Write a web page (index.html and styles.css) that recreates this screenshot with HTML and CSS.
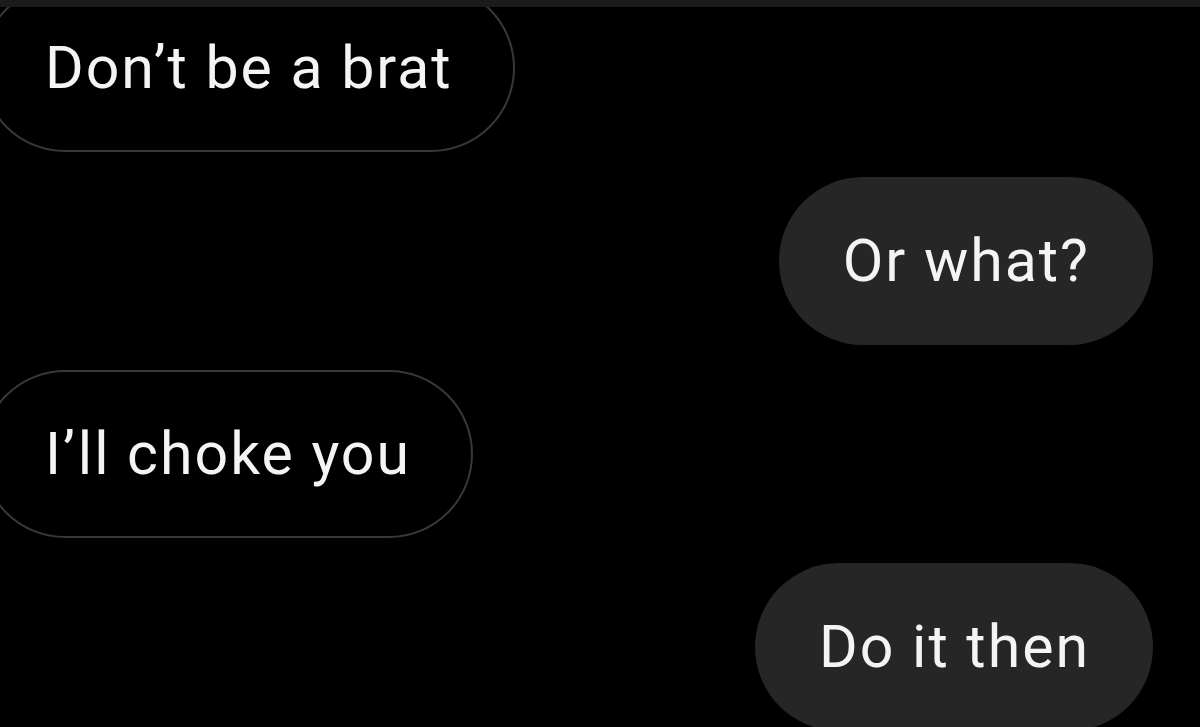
FILE: index.html
```html
<!DOCTYPE html>
<html lang="en">
<head>
	<meta charset="UTF-8">
	<meta name="viewport" content="width=device-width, initial-scale=1.0">
	<title>Chat</title>
	<link rel="stylesheet" href="styles.css">
</head>
<body>

	<div class="top-bar"></div>

	<div class="chat">
		<div class="bubble bubble--in">Don’t be a brat</div>
		<div class="bubble bubble--out">Or what?</div>
		<div class="bubble bubble--in">I’ll choke you</div>
		<div class="bubble bubble--out">Do it then</div>
	</div>

</body>
</html>
```

FILE: styles.css
```css
*, *::after, *::before {
	box-sizing: border-box;
}

body {
	margin: 0;
	height: 100vh;
	overflow: hidden;
	background-color: #000;
	font-family: Roboto, "Liberation Sans", sans-serif;
}

.top-bar {
	position: relative;
	z-index: 1;
	height: 7px;
	background-color: #1b1b1b;
}

.chat {
	display: flex;
	flex-direction: column;
	gap: 25px;
	margin-top: -23px;
}

.bubble {
	display: flex;
	align-items: center;
	height: 168px;
	padding: 0 63px 0 64px;
	border-radius: 84px;
	font-size: 59px;
	line-height: 1.2;
	letter-spacing: 2px;
	color: #f4f4f4;
}

.bubble--in {
	align-self: flex-start;
	margin-left: -19px;
	border: 2px solid #383838;
	padding-right: 60px;
	padding-left: 62px;
}

.bubble--out {
	align-self: flex-end;
	margin-right: 47px;
	background-color: #262626;
}
```
